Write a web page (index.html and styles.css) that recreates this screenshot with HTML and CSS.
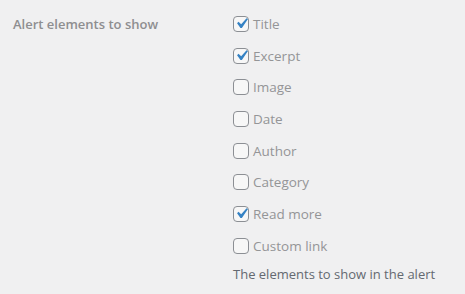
FILE: index.html
```html
<!DOCTYPE html>
<html lang="en">
<head>
    <meta charset="UTF-8">
    <title>Alert settings</title>
    <link rel="stylesheet" href="styles.css">
</head>
<body>

<div class="form-row">
    <div class="row-label">Alert elements to show</div>
    <div class="row-field">
        <div class="options">
            <label class="option">
                <span class="box"><svg viewBox="0 0 20 20" class="check"><path d="M14.83 4.89l1.34.94-5.81 8.38H9.02L5.78 9.67l1.34-1.25 2.57 2.4z"/></svg></span>
                Title
            </label>
            <label class="option">
                <span class="box"><svg viewBox="0 0 20 20" class="check"><path d="M14.83 4.89l1.34.94-5.81 8.38H9.02L5.78 9.67l1.34-1.25 2.57 2.4z"/></svg></span>
                Excerpt
            </label>
            <label class="option"><span class="box"></span>Image</label>
            <label class="option"><span class="box"></span>Date</label>
            <label class="option"><span class="box"></span>Author</label>
            <label class="option"><span class="box"></span>Category</label>
            <label class="option">
                <span class="box"><svg viewBox="0 0 20 20" class="check"><path d="M14.83 4.89l1.34.94-5.81 8.38H9.02L5.78 9.67l1.34-1.25 2.57 2.4z"/></svg></span>
                Read more
            </label>
            <label class="option"><span class="box"></span>Custom link</label>
        </div>
        <p class="description">The elements to show in the alert</p>
    </div>
</div>

</body>
</html>
```

FILE: styles.css
```css
body {
    margin: 0;
    background-color: #f0f0f1;
    font-family: "Open Sans", "Segoe UI", sans-serif;
    font-size: 13px;
}
.form-row {
    display: flex;
    padding: 14px 0 0 13px;
}
.row-label {
    width: 220px;
    flex-shrink: 0;
    font-weight: 600;
    font-size: 13px;
    color: #8e8e90;
    line-height: 20px;
}
.options {
    display: flex;
    flex-direction: column;
    gap: 11.67px;
}
.option {
    display: flex;
    align-items: center;
    gap: 4px;
    height: 20px;
    color: #949597;
    font-size: 13.5px;
}
.box {
    position: relative;
    box-sizing: border-box;
    width: 16px;
    height: 16px;
    border: 1px solid #8c8f94;
    border-radius: 4px;
    background: #f7f7f7;
    flex-shrink: 0;
}
.check {
    position: absolute;
    left: -3px;
    top: -4px;
    width: 21px;
    height: 21px;
    fill: #3582c4;
}
.description {
    margin: 8px 0 0;
    color: #646970;
    line-height: 20px;
}
```
